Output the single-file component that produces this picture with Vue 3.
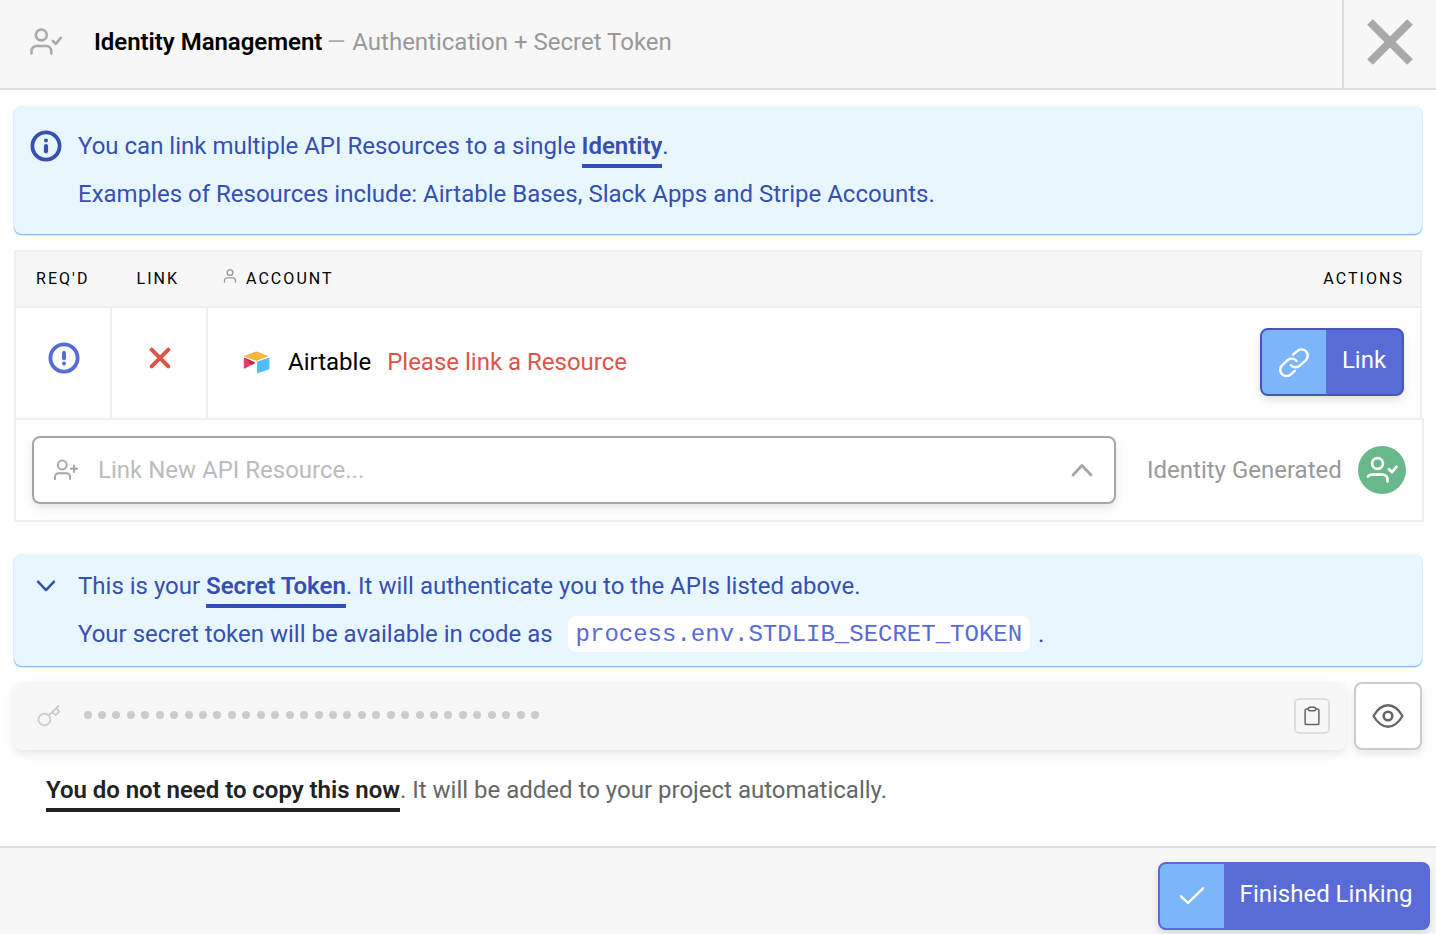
<script setup>
const maskLength = 32
</script>

<template>
  <div class="modal">
    <header class="head">
      <svg class="head-icon" width="34" height="30" viewBox="0 0 34 30" fill="none" stroke="#aaa" stroke-width="2.600" stroke-linecap="round" stroke-linejoin="round">
        <circle cx="11.300" cy="8" r="5.400" />
        <path d="M1.500 26.500V24a5 5 0 0 1 5-5h9.700a5 5 0 0 1 5 5v2.500M22.800 13.800l3 3 5-6" />
      </svg>
      <h1 class="title"><b>Identity Management</b> <span class="dash">—</span> <span class="sub">Authentication + Secret Token</span></h1>
      <button class="close" aria-label="Close">
        <svg width="46" height="46" viewBox="0 0 46 46" stroke="#a9a9a9" stroke-width="8"><path d="M3 3l40 40M43 3L3 43" /></svg>
      </button>
    </header>

    <main class="body">
      <section class="notice first">
        <svg class="notice-icon" width="32" height="32" viewBox="0 0 32 32" fill="none" stroke="#3550b0" stroke-linecap="round">
          <circle cx="16" cy="16" r="13.600" stroke-width="3.800" />
          <path d="M16 16v5.300" stroke-width="4.200" />
          <circle cx="16" cy="10.500" r="2" fill="#3550b0" stroke="none" />
        </svg>
        <div>
          <p>You can link multiple API Resources to a single <b>Identity</b>.</p>
          <p>Examples of Resources include: Airtable Bases, Slack Apps and Stripe Accounts.</p>
        </div>
      </section>

      <section class="resources">
        <div class="table">
          <div class="thead">
            <span class="th req">REQ'D</span>
            <span class="th lnk">LINK</span>
            <span class="th acc">
              <svg width="14" height="16" viewBox="0 0 14 16" fill="none" stroke="#999" stroke-width="1.300" stroke-linecap="round">
                <circle cx="7" cy="4.500" r="2.900" />
                <path d="M1.500 14v-1.500a2.700 2.700 0 0 1 2.700-2.700h5.600a2.700 2.700 0 0 1 2.700 2.700V14" />
              </svg>
              ACCOUNT
            </span>
            <span class="th act">ACTIONS</span>
          </div>
          <div class="row">
            <div class="cell small">
              <svg width="32" height="32" viewBox="0 0 32 32" fill="none" stroke="#586bd6" stroke-linecap="round">
                <circle cx="16" cy="16" r="13.600" stroke-width="3.800" />
                <path d="M16 10.700v5.600" stroke-width="4" />
                <circle cx="16" cy="21.500" r="2" fill="#586bd6" stroke="none" />
              </svg>
            </div>
            <div class="cell small linkcell">
              <svg width="22" height="22" viewBox="0 0 22 22" stroke="#dc5547" stroke-width="4" stroke-linecap="round"><path d="M2.700 2.700l16.600 16.600M19.300 2.700L2.700 19.300" /></svg>
            </div>
            <div class="cell account">
              <svg width="27" height="23" viewBox="0 0 27 23">
                <path d="M1.800 4.700L12.300.800q1-.4 2 0l10.300 3.900q.9.500 0 1L14.300 9.600q-1 .4-2 0L1.800 5.700q-.8-.5 0-1z" fill="#f5b53f" />
                <path d="M14 11.600q0-.8.700-1l10.800-3.900q.9-.2.900.6v10q0 .8-.7 1.100l-10.800 3.900q-.9.300-.9-.6z" fill="#54bdf8" />
                <path d="M.8 7.300q0-.9 1-.5L11.700 11.200q.7.500 0 1L1.800 17.500q-1 .3-1-.6z" fill="#e63e6b" />
                <path d="M1.800 6.800L11.700 11.200q.7.500 0 1L8.300 14z" fill="#b0304f" />
              </svg>
              <span class="name">Airtable</span>
              <span class="warn">Please link a Resource</span>
            </div>
            <button class="btn link-btn">
              <span class="btn-icon">
                <svg width="32" height="32" viewBox="0 0 32 32" fill="none" stroke="#fff" stroke-width="2.400" stroke-linecap="round" stroke-linejoin="round">
                  <path d="M12.900 18.300a6.300 6.300 0 0 0 8.900.3l6.200-5.500A6.300 6.300 0 0 0 18.900 4.300L15.100 7.600" />
                  <path d="M18.700 13.900a6.300 6.300 0 0 0-8.900-.9L4 18.300a6.300 6.300 0 0 0 9.200 8.900L16.700 23.800" />
                </svg>
              </span>
              <span class="btn-text">Link</span>
            </button>
          </div>
        </div>
        <div class="new-row">
          <div class="select">
            <svg width="26" height="24" viewBox="0 0 26 24" fill="none" stroke="#a6a6a6" stroke-width="2" stroke-linecap="round" stroke-linejoin="round">
              <circle cx="9.300" cy="7" r="4.400" />
              <path d="M2 21v-2a3.800 3.800 0 0 1 3.800-3.800h7.400A3.800 3.800 0 0 1 17 19v2M21 7.500v6.500M17.800 10.800h6.500" />
            </svg>
            <span class="placeholder">Link New API Resource...</span>
            <svg width="22" height="14" viewBox="0 0 22 14" fill="none" stroke="#a6a6a6" stroke-width="2.800" stroke-linecap="round" stroke-linejoin="round"><path d="M2 12L11 2.500l9 9.500" /></svg>
          </div>
          <span class="generated">Identity Generated</span>
          <span class="avatar">
            <svg width="32" height="28" viewBox="0 0 32 28" fill="none" stroke="#fff" stroke-width="2.700" stroke-linecap="round" stroke-linejoin="round">
              <circle cx="11.500" cy="7.500" r="5.400" />
              <path d="M2 20.500q1-1.900 4-1.900h10.500a5 5 0 0 1 5 5V25.500M23 13.200l3 3 4.500-5.500" />
            </svg>
          </span>
        </div>
      </section>

      <section class="notice second">
        <svg class="chev" width="20" height="14" viewBox="0 0 20 14" fill="none" stroke="#3550b0" stroke-width="2.500" stroke-linecap="round" stroke-linejoin="round"><path d="M2 2.700L10 11.200l8-8.500" /></svg>
        <div>
          <p>This is your <b>Secret Token</b>. It will authenticate you to the APIs listed above.</p>
          <p>Your secret token will be available in code as <code>process.env.STDLIB_SECRET_TOKEN</code>.</p>
        </div>
      </section>

      <div class="token-row">
        <div class="token">
          <svg class="key" width="24" height="22" viewBox="0 0 24 22" fill="none" stroke="#ccc" stroke-width="1.800" stroke-linecap="round" stroke-linejoin="round">
            <circle cx="7.400" cy="14.500" r="5.900" />
            <path d="M11.700 10.300L21.500 1M15.500 7l3 3.200 3.700-3.500-2.900-3.300" />
          </svg>
          <div class="dots"><i v-for="n in maskLength" :key="n"></i></div>
          <button class="clip" aria-label="Copy">
            <svg width="16" height="20" viewBox="0 0 16 20" fill="none" stroke="#666" stroke-width="1.500" stroke-linejoin="round">
              <path d="M4.500 3H2.300a1.200 1.200 0 0 0-1.200 1.200v13.100a1.200 1.200 0 0 0 1.200 1.200h11.400a1.200 1.200 0 0 0 1.200-1.200V4.200A1.200 1.200 0 0 0 13.700 3h-2.200" />
              <rect x="4.500" y="1.200" width="7" height="3.600" rx="1.200" />
            </svg>
          </button>
        </div>
        <button class="eye" aria-label="Show">
          <svg width="32" height="24" viewBox="0 0 32 24" fill="none" stroke="#666" stroke-width="2.400" stroke-linejoin="round">
            <path d="M1.500 12Q7.800 1.300 16 1.300T30.500 12Q24.200 22.700 16 22.700T1.500 12z" />
            <circle cx="16" cy="12" r="4.300" stroke-width="2.600" />
          </svg>
        </button>
      </div>
      <p class="hint"><b>You do not need to copy this now</b>. It will be added to your project automatically.</p>
    </main>

    <footer class="foot">
      <button class="btn done">
        <span class="btn-icon">
          <svg width="26" height="20" viewBox="0 0 26 20" fill="none" stroke="#fff" stroke-width="2.400" stroke-linecap="round" stroke-linejoin="round"><path d="M2 10.300l7 6.700L24 2.300" /></svg>
        </span>
        <span class="btn-text">Finished Linking</span>
      </button>
    </footer>
  </div>
</template>

<style>
body { margin: 0; background: #fff; }
</style>

<style scoped>
* { box-sizing: border-box; }
p, h1 { margin: 0; }
svg { display: block; flex: none; }
button { font: inherit; padding: 0; margin: 0; }
b { font-weight: 600; letter-spacing: -.035px; }
.modal {
  width: 1436px; height: 934px; overflow: hidden;
  display: flex; flex-direction: column;
  font: 24px/48px Roboto, sans-serif; color: #000; background: #fff;
}
.head {
  height: 90px; flex: none; display: flex; align-items: stretch;
  background: #f7f7f7; border-bottom: 2px solid #ddd;
}
.head-icon { margin: 27px 0 0 30px; }
.title { margin-left: 30px; padding-top: 18px; font-size: 24px; font-weight: 400; line-height: 48px; flex: 1; white-space: nowrap; }
.dash { color: #aaa; display: inline-block; transform: scaleX(.97); margin: 0 -2px 0 -1.400px; width: 21.500px; }
.sub { color: #999; }
.close {
  width: 94px; border: 0; border-left: 2px solid #ddd; background: none;
  display: flex; align-items: flex-start; padding: 19px 0 0 23px; height: 90px;
}
.body { flex: 1; padding: 16px 12px 0 14px; }
.notice {
  width: 1408px; display: flex; background: #e8f7ff; border-radius: 8px; color: #3550b0;
  box-shadow: 0 1px 1px #7db5fb, 0 1px 2px #a5cdfc;
}
.notice p { height: 48px; white-space: nowrap; }
.notice b { border-bottom: 4px solid #3550b0; padding-bottom: 4px; }
.first { height: 128px; padding: 16px 0 0 16px; gap: 16px; }
.notice-icon { margin-top: 8px; }
.second { height: 112px; margin-top: 32px; padding: 8px 0 0 22px; gap: 22px; }
.chev { margin-top: 17px; }
code {
  display: inline-block; height: 36px; line-height: 38px; padding: 0 8px; margin: -2px 8px 2px 9px;
  border-radius: 8px; background: #fff; color: #586bd6;
  font-family: Courier, "Courier New", "Liberation Mono", monospace; font-size: 24px; vertical-align: middle;
}
.resources { margin-top: 16px; width: 1410px; }
.table { width: 1408px; border: 2px solid #efefef; border-bottom: 0; }
.thead {
  display: flex; align-items: center; height: 56px; background: #f7f7f7;
  border-bottom: 2px solid #efefef; font-size: 16px; letter-spacing: 2.050px; line-height: 54px;
}
.req { width: 100px; padding-left: 20px; }
.lnk { width: 107px; padding-left: 20.500px; }
.acc { flex: 1; display: flex; gap: 9px; }
.acc svg { margin-top: 16px; }
.act { padding-right: 16px; }
.row { display: flex; height: 110px; }
.cell { border-right: 2px solid #efefef; }
.small { width: 96px; display: flex; justify-content: center; padding-top: 34px; }
.small:first-child { padding-left: 2px; }
.linkcell { padding-top: 39px; padding-left: 2px; }
.account { border: 0; flex: 1; display: flex; padding: 30px 0 0 35px; }
.account svg { margin-top: 13px; }
.name { margin-left: 18px; }
.warn { margin-left: 16px; color: #dc5547; }
.btn {
  display: flex; height: 68px; border: 2px solid #586bd6; border-radius: 8px; background: #586bd6;
  color: #fff; overflow: hidden; box-shadow: 0 4px 8px rgba(0,0,0,.12);
}
.btn-icon { width: 64px; height: 64px; background: #7db5fa; display: flex; align-items: center; justify-content: center; flex: none; }
.btn-text { flex: 1; text-align: center; line-height: 60px; white-space: nowrap; }
.link-btn { width: 144px; border-color: #4a55b5; margin: 20px 16px 0 0; }
.link-btn .btn-icon { padding-top: 1px; }
.new-row { height: 104px; border: 2px solid #efefef; display: flex; align-items: center; padding-left: 16px; }
.select {
  width: 1084px; height: 68px; border: 2px solid #a6a6a6; border-radius: 8px; display: flex; align-items: center;
  padding: 0 21px 0 19px; box-shadow: 0 4px 10px rgba(0,0,0,.1);
}
.placeholder { flex: 1; margin-left: 19px; color: #bbb; }
.generated { margin-left: 31px; color: #999; width: 195px; white-space: nowrap; }
.avatar { width: 48px; height: 48px; margin-left: 16px; border-radius: 50%; background: #68b88c; display: flex; align-items: center; justify-content: center; }
.token-row { display: flex; gap: 8px; margin-top: 16px; }
.token {
  width: 1332px; height: 68px; background: #f7f7f7; border-radius: 8px; display: flex; align-items: center;
  padding: 0 16px 0 22.500px; box-shadow: 0 4px 10px rgba(0,0,0,.1);
}
.dots { flex: 1; display: flex; margin: -2px 0 0 23px; }
.dots i { width: 8px; height: 8px; border-radius: 50%; background: #ccc; margin-right: 6.450px; }
.clip { width: 36px; height: 36px; border: 2px solid #ddd; border-radius: 5px; background: none; display: flex; align-items: center; justify-content: center; }
.eye { width: 68px; height: 68px; border: 2px solid #ccc; border-radius: 8px; background: #fff; display: flex; align-items: center; justify-content: center; box-shadow: 0 4px 8px rgba(0,0,0,.1); }
.hint { margin: 16px 0 0 32px; color: #666; white-space: nowrap; }
.hint b { color: #222; border-bottom: 4px solid #222; padding-bottom: 4px; }
.foot { height: 88px; flex: none; background: #f7f7f7; border-top: 2px solid #ddd; display: flex; justify-content: flex-end; padding: 14px 6px 0; }
.done { width: 272px; }
</style>
